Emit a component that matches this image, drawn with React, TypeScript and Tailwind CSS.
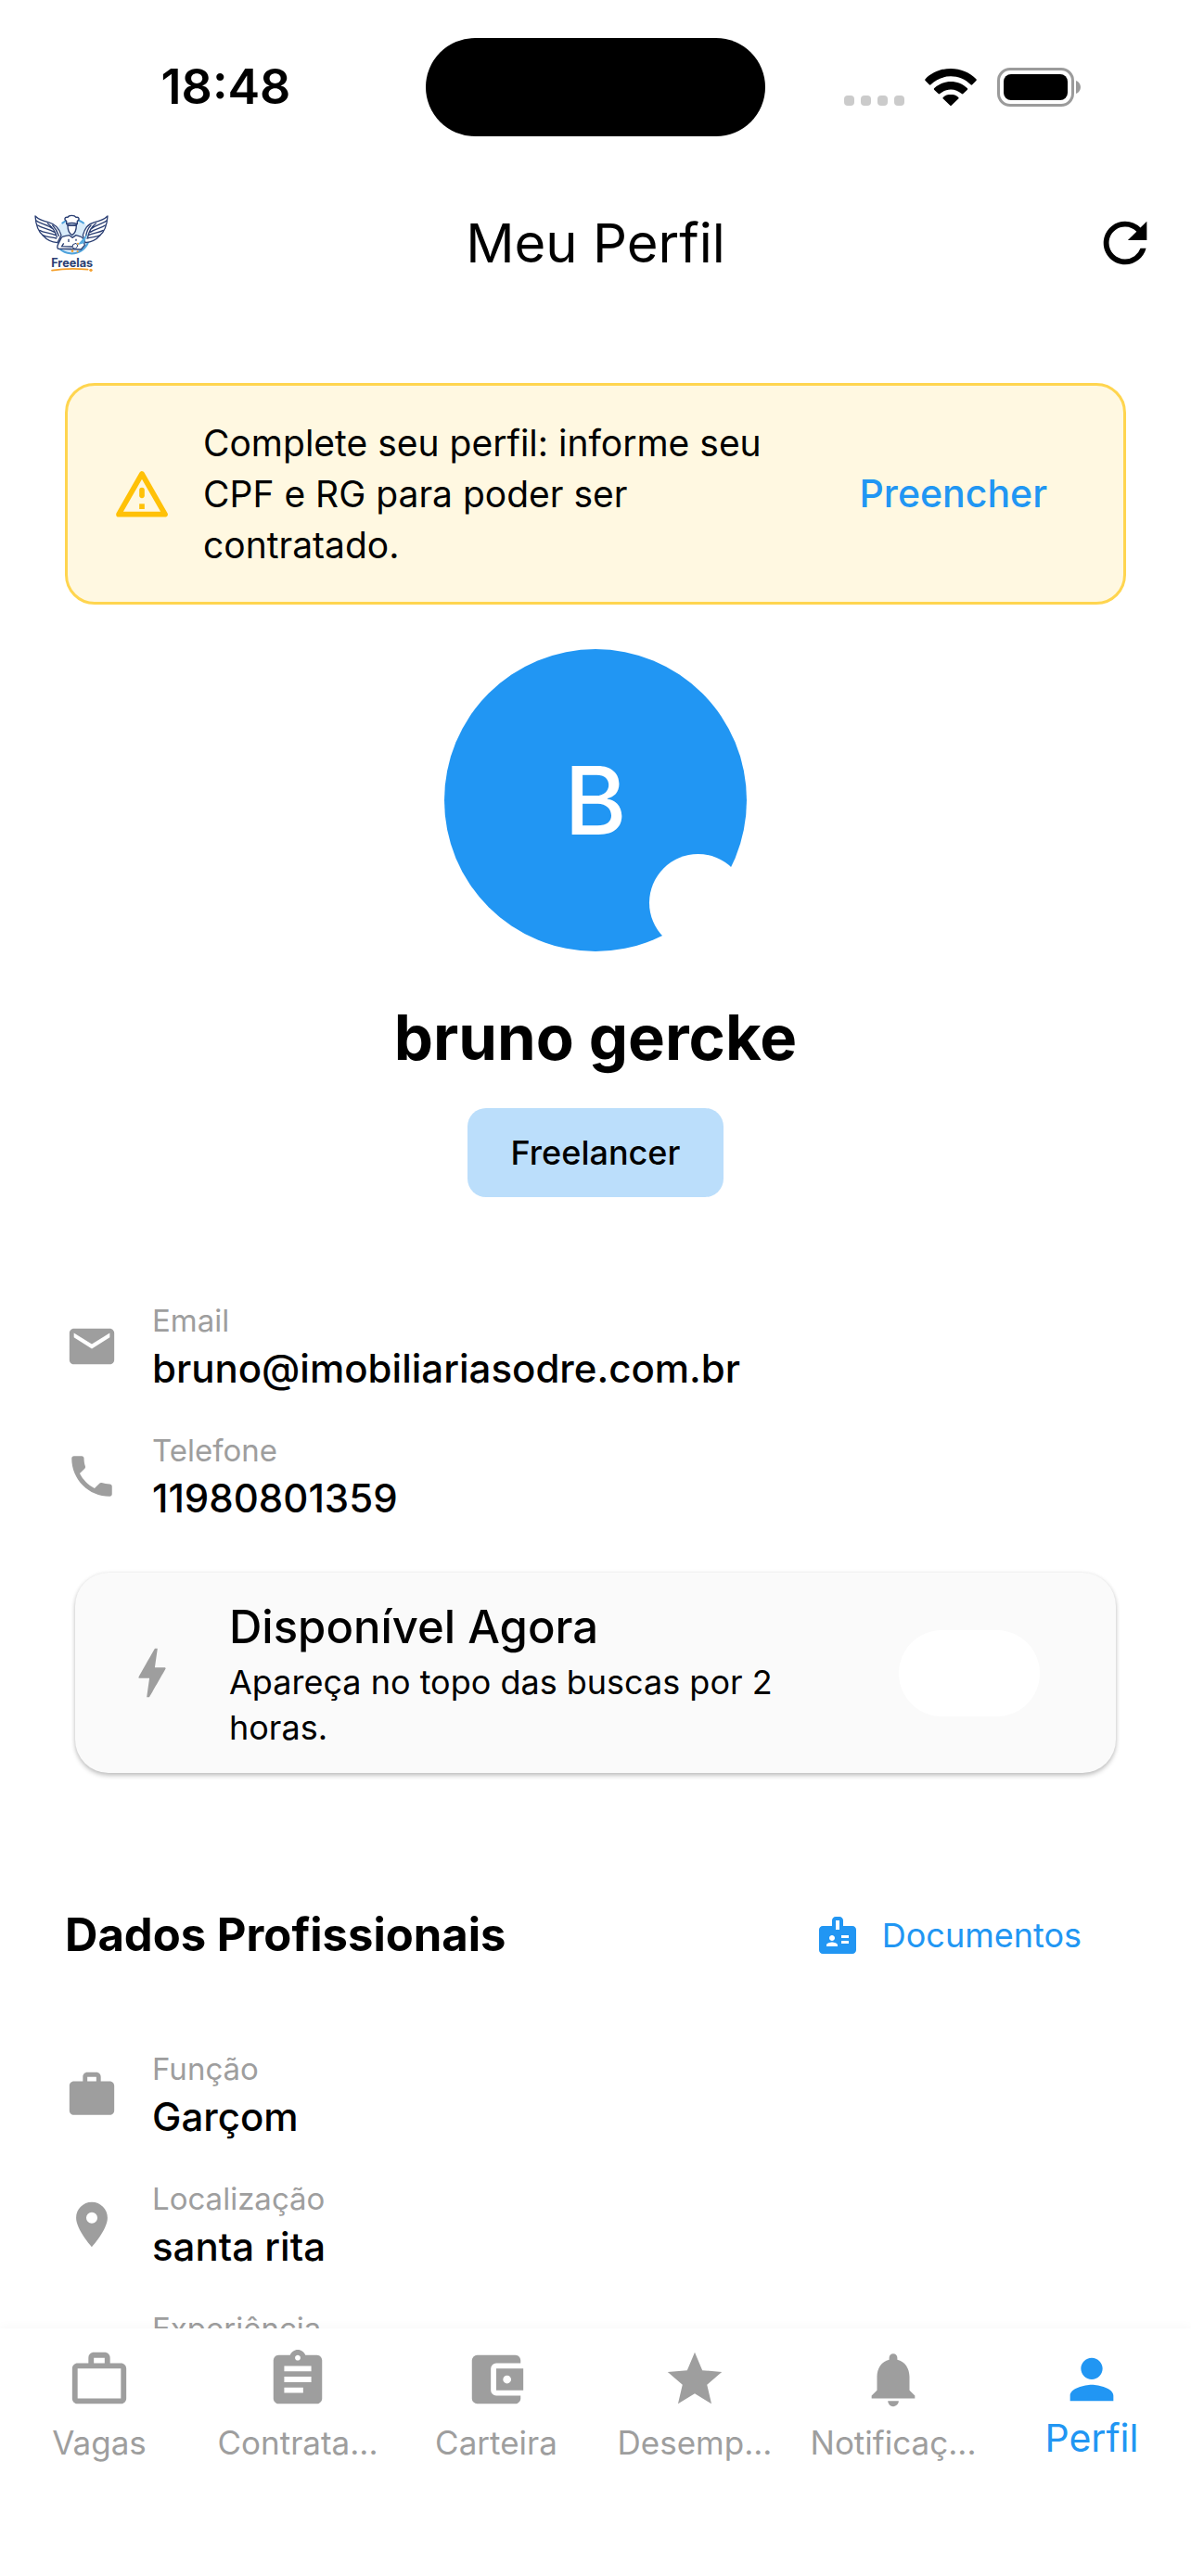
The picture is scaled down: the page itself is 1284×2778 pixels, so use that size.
import type { IconType } from 'react-icons';
import {
  MdAccountBalanceWallet,
  MdAssignment,
  MdBadge,
  MdBolt,
  MdEmail,
  MdLocationOn,
  MdNotifications,
  MdPerson,
  MdPhone,
  MdRefresh,
  MdStar,
  MdWork,
  MdWorkOutline,
} from 'react-icons/md';

interface InfoRowProps {
  icon: IconType;
  label: string;
  value?: string;
}

interface NavItem {
  icon: IconType;
  label: string;
  active?: boolean;
}

const navItems: NavItem[] = [
  { icon: MdWorkOutline, label: 'Vagas' },
  { icon: MdAssignment, label: 'Contrata...' },
  { icon: MdAccountBalanceWallet, label: 'Carteira' },
  { icon: MdStar, label: 'Desemp...' },
  { icon: MdNotifications, label: 'Notificaç...' },
  { icon: MdPerson, label: 'Perfil', active: true },
];

const StatusBar = () => (
  <div className="grid h-[188px] shrink-0 grid-cols-[1fr_366px_1fr] items-start pt-[41px]">
    <div className="flex h-[106px] items-center justify-center pl-7 text-[52px] font-semibold">18:48</div>
    <div className="h-[106px] rounded-full bg-black" />
    <div className="flex h-[106px] items-center justify-center pr-[34px]">
      <div className="mt-7 flex gap-[7px]">
        <span className="h-[11px] w-[11px] rounded-sm bg-[#cbcbcb]" />
        <span className="h-[11px] w-[11px] rounded-sm bg-[#cbcbcb]" />
        <span className="h-[11px] w-[11px] rounded-sm bg-[#cbcbcb]" />
        <span className="h-[11px] w-[11px] rounded-sm bg-[#cbcbcb]" />
      </div>
      <svg className="ml-[22px] h-10 w-14" viewBox="0 0 56 40" aria-hidden="true">
        <path d="M28 0C17.500 0 7.500 4 .6 11.200a1.200 1.200 0 0 0 0 1.700l4.200 4.300a1.200 1.200 0 0 0 1.700 0C12.300 11.500 20 8.300 28 8.300s15.700 3.200 21.500 8.900a1.200 1.200 0 0 0 1.700 0l4.200-4.300a1.200 1.200 0 0 0 0-1.700C48.500 4 38.500 0 28 0z" />
        <path d="M28 14c-6.700 0-13 2.600-17.700 7.100a1.200 1.200 0 0 0 0 1.800l4.300 4.200a1.200 1.200 0 0 0 1.700 0C19.500 24.100 23.600 22.400 28 22.400s8.500 1.700 11.700 4.700a1.200 1.200 0 0 0 1.700 0l4.300-4.200a1.200 1.200 0 0 0 0-1.800C41 16.600 34.700 14 28 14z" />
        <path d="M28 27.700c-3.100 0-6 1.200-8.200 3.200a1.200 1.200 0 0 0 0 1.700l7.300 7a1.200 1.200 0 0 0 1.800 0l7.300-7a1.200 1.200 0 0 0 0-1.700c-2.200-2-5.100-3.200-8.200-3.200z" />
      </svg>
      <svg className="ml-[22px] h-[42px] w-[90px]" viewBox="0 0 90 42" aria-hidden="true">
        <rect x="1.500" y="1.500" width="80" height="39" rx="12.500" fill="none" stroke="#9b9b9b" strokeWidth="3" />
        <rect x="7" y="7" width="69" height="28" rx="8" />
        <path d="M85 14c3 1 5 4 5 7s-2 6-5 7z" fill="#9b9b9b" />
      </svg>
    </div>
  </div>
);

const Logo = () => (
  <svg className="h-[63px] w-[83px]" viewBox="30 62 249 189" role="img" aria-label="Freelas">
    <circle cx="158" cy="134" r="57" fill="#d9ecfa" />
    <path d="M122 92a57 57 0 0 1 72 0M207 112a57 57 0 0 1-92 62" fill="none" stroke="#4fa3dc" strokeWidth="6" />
    <g fill="#fff" stroke="#2b3f73" strokeWidth="4" strokeLinejoin="round">
      <path d="M36 68c2 30 8 50 26 64 10 12 26 20 46 22l12-24c-6-20-18-36-42-42C60 84 46 78 36 68z" />
      <path d="M270 68c-2 30-8 50-26 64-10 12-26 20-46 22l-8-24c6-20 14-36 38-42 18-4 32-10 42-20z" />
    </g>
    <g fill="none" stroke="#2b3f73" strokeWidth="4" strokeLinecap="round">
      <path d="M38 82c14 12 36 12 56 28M44 98c14 10 34 10 54 22M50 114c14 8 32 8 52 16M60 130c12 6 26 6 44 10M76 92c14 10 24 24 30 44M92 98c12 12 16 22 20 34" />
      <path d="M268 82c-14 12-32 12-52 28M262 98c-14 10-30 10-48 22M256 114c-14 8-30 8-48 16M246 130c-12 6-26 6-42 10M232 92c-14 10-22 24-26 44M216 98c-12 12-14 22-16 34" />
    </g>
    <g fill="#fff" stroke="#2b3f73" strokeWidth="4" strokeLinejoin="round">
      <path d="M110 174c-4-4-3-9 0-15l10-20c3-6 20-7 26-9l10 8 12-8c8 2 18 4 22 10l6 22-12 14z" />
      <path d="M141 98c0 18 4 26 14 32 10-6 14-14 14-32z" />
      <path d="M137 94V84c-8-3-7-14 4-12 4-8 22-8 27 0 11-2 12 9 4 12v10c-10-4-25-4-35 0z" />
    </g>
    <path d="M139 94c10 5 22 5 32 0v6h-32z" fill="#2b3f73" />
    <path d="M110 174h44M128 156l-6 10 34 1M144 142v10M168 142v6" fill="none" stroke="#2b3f73" strokeWidth="4" />
    <path d="M206 124l-34 38 22-6z" fill="#58abdf" />
    <path d="M158 160l10-4 6 8-8 10-10-4z" fill="#fff" stroke="#2b3f73" strokeWidth="3" />
    <circle cx="156" cy="181" r="4" fill="#f5a02c" />
    <circle cx="173" cy="183" r="3" fill="#f5a02c" />
    <circle cx="174" cy="157" r="3" fill="#f5a02c" />
    <text x="155" y="232" textAnchor="middle" fontSize="38" fontWeight="700" fill="#2b3f73">Freelas</text>
    <path d="M90 244c36-6 76-7 116-3" fill="none" stroke="#f5a02c" strokeWidth="5" strokeLinecap="round" />
    <circle cx="216" cy="243" r="5" fill="#f5a02c" />
  </svg>
);

const WarningIcon = () => (
  <svg className="h-[60px] w-[60px] shrink-0 text-[#ffc107]" viewBox="29 30 180 180" aria-hidden="true">
    <path d="M119 54l75 131H44z" fill="none" stroke="currentColor" strokeWidth="17" strokeLinejoin="round" />
    <path d="M119 107v17" stroke="currentColor" strokeWidth="17" strokeLinecap="round" />
    <rect x="110.500" y="151" width="17" height="17" fill="currentColor" />
  </svg>
);

const InfoRow = ({ icon: Icon, label, value }: InfoRowProps) => (
  <div className="flex items-center gap-9">
    <Icon className="h-[58px] w-[58px] shrink-0 text-[#9e9e9e]" />
    <div>
      <dt className="text-[33px] leading-[48px] text-[#9e9e9e]">{label}</dt>
      <dd className="min-h-14 text-[42px] leading-[56px] font-medium">{value}</dd>
    </div>
  </div>
);

const App = () => {
  return (
    <div className="flex h-screen flex-col overflow-hidden bg-white font-['Inter','Liberation_Sans',sans-serif] text-black">
      <StatusBar />

      <header className="grid h-[148px] shrink-0 grid-cols-[1fr_auto_1fr] items-center px-9">
        <Logo />
        <h1 className="text-[58px]">Meu Perfil</h1>
        <button type="button" aria-label="Atualizar" className="justify-self-end">
          <MdRefresh className="h-[70px] w-[70px]" />
        </button>
      </header>

      <main className="min-h-0 flex-1 overflow-hidden px-[70px] pt-[77px]">
        <section className="flex items-center gap-9 rounded-[32px] border-3 border-[#ffd54f] bg-[#fff8e1] py-[34px] pr-[82px] pl-[50px]">
          <WarningIcon />
          <p className="flex-1 pr-16 text-[39px] leading-[55px]">
            Complete seu perfil: informe seu CPF e RG para poder ser contratado.
          </p>
          <button type="button" className="text-[41px] font-medium text-[#2196f3]">Preencher</button>
        </section>

        <section className="mt-12 flex flex-col items-center">
          <div className="relative flex h-[326px] w-[326px] items-center justify-center rounded-full bg-[#2196f3] text-[102px] font-medium text-white">
            B
            <button type="button" aria-label="Alterar foto" className="absolute right-0 bottom-0 h-[105px] w-[105px] rounded-full bg-white" />
          </div>
          <h2 className="mt-[53px] text-[67px] leading-20 font-bold">bruno gercke</h2>
          <span className="mt-9 flex h-24 items-center rounded-[20px] bg-[#bbdefb] px-[47px] text-[36px] font-medium">Freelancer</span>
        </section>

        <dl className="mt-[109px] flex flex-col gap-9">
          <InfoRow icon={MdEmail} label="Email" value="bruno@imobiliariasodre.com.br" />
          <InfoRow icon={MdPhone} label="Telefone" value="11980801359" />
        </dl>

        <label className="mx-[11px] mt-[52px] flex items-center gap-12 rounded-[36px] bg-[#fafafa] py-6 pr-[82px] pl-12 shadow-[0_3px_5px_rgba(0,0,0,0.22),0_0_4px_rgba(0,0,0,0.08)]">
          <MdBolt className="h-[70px] w-[70px] shrink-0 text-[#9e9e9e]" />
          <span className="flex-1 pr-16">
            <span className="block text-[49px] leading-[70px] font-medium">Disponível Agora</span>
            <span className="block text-[36px] leading-[49px]">Apareça no topo das buscas por 2 horas.</span>
          </span>
          <input type="checkbox" role="switch" className="h-[93px] w-[152px] shrink-0 appearance-none rounded-full bg-white" />
        </label>

        <div className="mt-[145px] flex items-center justify-between pr-12">
          <h2 className="text-[49px] leading-[60px] font-bold">Dados Profissionais</h2>
          <button type="button" className="flex items-center gap-6 text-[36px] text-[#2196f3]">
            <MdBadge className="h-12 w-12" />
            Documentos
          </button>
        </div>

        <dl className="mt-[90px] flex flex-col gap-9">
          <InfoRow icon={MdWork} label="Função" value="Garçom" />
          <InfoRow icon={MdLocationOn} label="Localização" value="santa rita" />
          <InfoRow icon={MdStar} label="Experiência" />
        </dl>
      </main>

      <nav className="grid h-[267px] shrink-0 grid-cols-6 items-start bg-white pt-5 shadow-[0_-2px_10px_rgba(0,0,0,0.03)]">
        {navItems.map(({ icon: Icon, label, active }) => (
          <a
            key={label}
            href="#"
            aria-current={active ? 'page' : undefined}
            className={active ? 'flex flex-col items-center text-[#2196f3]' : 'flex flex-col items-center text-[#9e9e9e]'}
          >
            <Icon className="h-[70px] w-[70px]" />
            <span className={active ? 'text-[41px] leading-[56px]' : 'mt-2 text-[35px] leading-[50px]'}>{label}</span>
          </a>
        ))}
      </nav>
    </div>
  );
};

export default App;
